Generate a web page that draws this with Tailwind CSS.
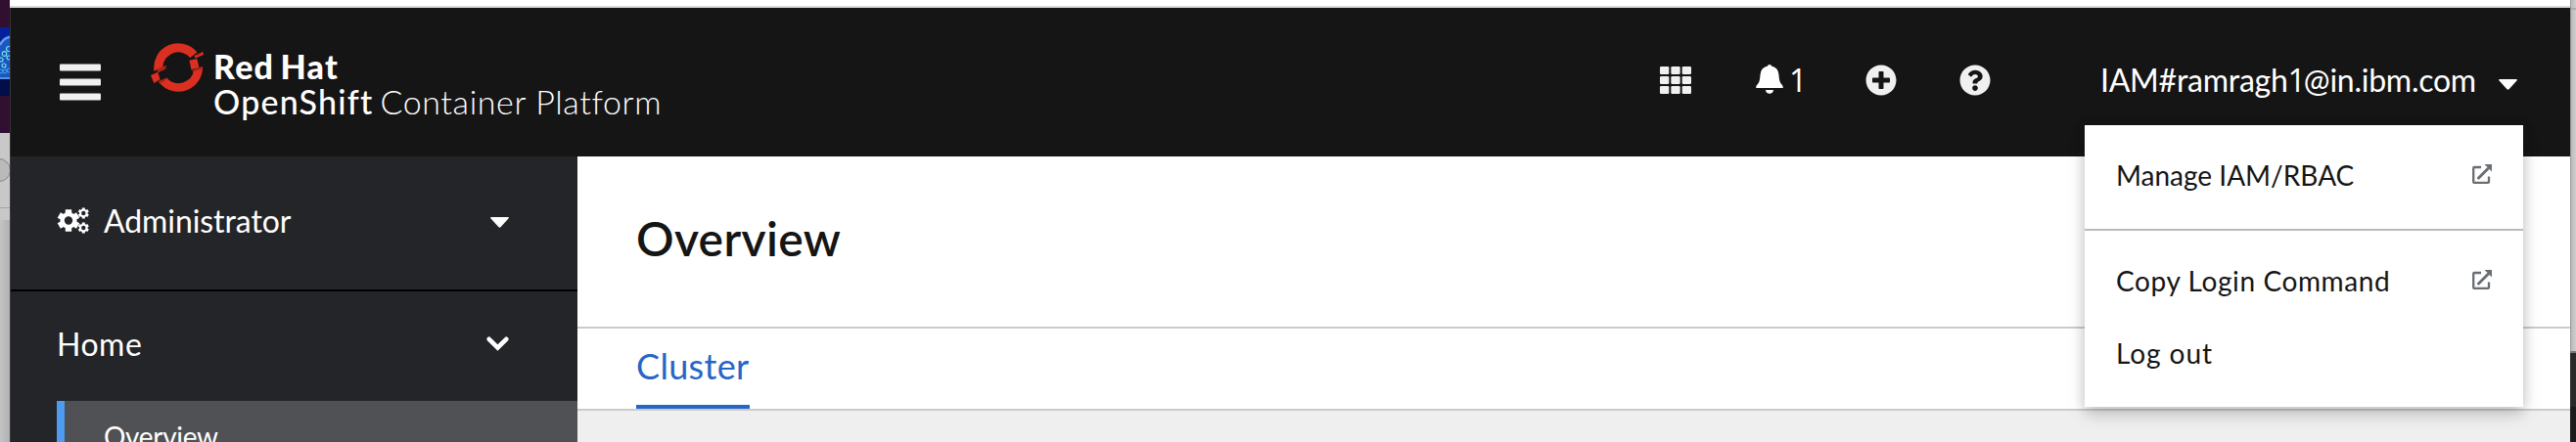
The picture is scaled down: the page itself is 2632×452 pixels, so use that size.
<!DOCTYPE html>
<html lang="en">
<head>
<meta charset="utf-8">
<title>Overview · Red Hat OpenShift Container Platform</title>
<script src="https://cdn.jsdelivr.net/npm/@tailwindcss/browser@4"></script>
</head>
<body class="flex h-[452px] w-[2632px] overflow-hidden bg-[#c6c6c6] font-['Lato','Liberation_Sans',sans-serif] text-[32px]">

<!-- Desktop to the left of the window -->
<div class="flex w-2.5 shrink-0 flex-col bg-linear-to-r from-[#c4c4c4] to-[#b0b0b0]">
  <div class="h-7 bg-[#300f31]"></div>
  <svg class="h-[70px] w-2.5" viewBox="0 0 10 70">
    <rect width="10" height="70" fill="#020e4a"/>
    <rect width="10" height="12" fill="#03209a"/>
    <path d="M0 52V14Q4 9 10 8V52Z" fill="#1c55c4"/>
    <path d="M0 18Q4 11 10 10" fill="none" stroke="#6ba4ee" stroke-width="2"/>
    <path d="M0 52H10" stroke="#5b8fe0" stroke-width="2"/>
    <g fill="none" stroke="#74dfdf" stroke-width="1.2"><circle cx="4.500" cy="27" r="2.300"/><circle cx="1" cy="33" r="2"/><circle cx="9" cy="31" r="2"/><circle cx="4" cy="39" r="2"/><circle cx="9" cy="22" r="2.500"/></g>
    <g fill="none" stroke="#3a9cdd" stroke-width="1.200"><circle cx="1" cy="45" r="1.800"/><circle cx="5" cy="45" r="1.800"/><circle cx="9" cy="44" r="1.800"/></g>
  </svg>
  <div class="h-[38px] bg-[#300f31]"></div>
  <svg class="h-[89px] w-2.5" viewBox="0 0 10 89">
    <rect width="10" height="89" fill="#c8c8c8"/>
    <circle cx="-1" cy="38" r="11.500" fill="#bababa" stroke="#848484"/>
    <path d="M0 76.500H10" stroke="#a2a2a2"/>
  </svg>
</div>

<!-- Browser window -->
<div class="flex h-[452px] w-[2616px] shrink-0 flex-col overflow-hidden bg-white">
  <div class="h-2 shrink-0 border-b-2 border-[#dadbdf] bg-white"></div>

  <header class="relative flex h-[152px] shrink-0 items-center border-l border-[#333] bg-[#151515] pl-[50px] pr-[54px] text-white">
    <svg class="h-[38px] w-[42px]" viewBox="0 0 42 38" fill="#f0f0f0"><rect y=".5" width="42" height="7" rx="1"/><rect y="15.500" width="42" height="7" rx="1"/><rect y="30.500" width="42" height="7" rx="1"/></svg>
    <svg class="-mt-[30px] ml-[51px] h-[50px] w-[54px]" viewBox="12 12 163 150">
      <g fill="#db2f21">
        <path d="M22.500 98A75 75 0 0 1 155 40L134 57A48 48 0 0 0 49 86L36 92Z"/>
        <path d="M172 84A75 75 0 0 1 38 133L61 119A48 48 0 0 0 145 94Z"/>
        <path d="M12 111L34 101L41 124L22 135Z"/>
        <path d="M131 65L155 60L161 87L137 94Z"/>
        <path d="M146 51L173 39L175 48L150 58Z"/>
      </g>
      <g fill="#ad2217">
        <path d="M34 91L60 80L58 92L32 104Z"/>
        <path d="M38 128L65 119L50 132L36 135Z"/>
        <path d="M134 57L173 39L160 49L146 51Z"/>
        <path d="M137 96L172 84L168 92L143 99Z"/>
      </g>
    </svg>
    <div class="ml-2.5 mt-1 whitespace-nowrap text-[34px] leading-9">
      <div class="font-black tracking-[1.2px] [word-spacing:-3px]">Red Hat</div>
      <div><span class="font-medium tracking-[1.2px]">OpenShift</span><span class="ml-[7px] font-light tracking-[0.6px]">Container Platform</span></div>
    </div>

    <div class="-mt-1 ml-auto flex items-center">
      <svg class="h-7 w-8" viewBox="0 0 32 28" fill="#f0f0f0">
        <rect width="9.300" height="8" rx="1.200"/><rect x="11.350" width="9.300" height="8" rx="1.200"/><rect x="22.700" width="9.300" height="8" rx="1.200"/>
        <rect y="10" width="9.300" height="8" rx="1.200"/><rect x="11.350" y="10" width="9.300" height="8" rx="1.200"/><rect x="22.700" y="10" width="9.300" height="8" rx="1.200"/>
        <rect y="20" width="9.300" height="8" rx="1.200"/><rect x="11.350" y="20" width="9.300" height="8" rx="1.200"/><rect x="22.700" y="20" width="9.300" height="8" rx="1.200"/>
      </svg>
      <svg class="-mt-0.5 ml-[66px] h-[30px] w-7" viewBox="0 0 28 30" fill="#fff">
        <path d="M12 1.500Q12 0 14 0T16 1.500Q23 3.200 23.500 10.500Q23.800 17 25.500 19.200Q28 21.800 28 23Q28 24 26.800 24H1.200Q0 24 0 23Q0 21.800 2.500 19.200Q4.200 17 4.500 10.500Q5 3.200 12 1.500Z"/>
        <path d="M10 26H18Q17.600 29.800 14 29.800T10 26Z"/>
      </svg>
      <span class="ml-1.5 w-[23px] font-['Open_Sans'] leading-10">1</span>
      <svg class="ml-[55px] size-8" viewBox="0 0 512 512" fill="#f0f0f0"><path d="M256 8C119 8 8 119 8 256s111 248 248 248 248-111 248-248S393 8 256 8zm144 276c0 6.600-5.400 12-12 12h-92v92c0 6.600-5.400 12-12 12h-56c-6.600 0-12-5.400-12-12v-92h-92c-6.600 0-12-5.400-12-12v-56c0-6.600 5.400-12 12-12h92v-92c0-6.600 5.400-12 12-12h56c6.600 0 12 5.400 12 12v92h92c6.600 0 12 5.400 12 12v56z"/></svg>
      <svg class="ml-16 size-8" viewBox="0 0 512 512" fill="#f0f0f0"><path d="M504 256c0 136.997-111.043 248-248 248S8 392.997 8 256C8 119.083 119.043 8 256 8s248 111.083 248 248zM262.655 90c-54.497 0-89.255 22.957-116.549 63.758-3.536 5.286-2.353 12.415 2.715 16.258l34.699 26.310c5.205 3.947 12.621 3.008 16.665-2.122 17.864-22.658 30.113-35.797 57.303-35.797 20.429 0 45.698 13.148 45.698 32.958 0 14.976-12.363 22.667-32.534 33.976C247.128 238.528 216 254.941 216 296v4c0 6.627 5.373 12 12 12h56c6.627 0 12-5.373 12-12v-1.333c0-28.462 83.186-29.647 83.186-106.667 0-58.002-60.165-102-116.531-102zM256 338c-25.365 0-46 20.635-46 46 0 25.364 20.635 46 46 46s46-20.636 46-46c0-25.365-20.635-46-46-46z"/></svg>
      <span class="ml-[112px] w-[407px] whitespace-nowrap leading-10 tracking-[-0.25px]">IAM#ramragh<span class="font-['Open_Sans'] tracking-[-2px]">1</span>@in.ibm.com</span>
      <svg class="mt-2 h-[11px] w-[19px]" viewBox="0 0 19 11" fill="#fff"><path d="M1 0H18Q19.500 .3 18.500 1.600L10.500 10.300Q9.500 11.200 8.500 10.300L.5 1.600Q-.5 .3 1 0Z"/></svg>
    </div>

    <!-- User menu -->
    <div class="absolute left-[2119px] top-[120px] z-10 w-[448px] bg-white text-[28px] text-[#151515] shadow-[0_8px_16px_rgba(3,3,3,0.18),0_0_12px_rgba(3,3,3,0.12)]">
      <div class="border-b-2 border-[#b8bbbe] pb-[18px] pt-3.5">
        <a class="flex h-[74px] items-center justify-between pl-8 pr-8">
          <span>Manage IAM/RBAC</span>
          <svg class="-mt-0.5 size-5" viewBox="0 0 20 20" fill="none" stroke="#6a6e73" stroke-width="2.300"><path d="M9 3H2Q1.200 3 1.200 4V18Q1.200 18.800 2 18.800H16Q17 18.800 17 18V12.500"/><path d="M6.500 14L16 4.500" stroke-width="3" stroke-linecap="round"/><path d="M12.500 0H20V7.500Z" fill="#6a6e73" stroke="none"/></svg>
        </a>
      </div>
      <div class="pb-[18px] pt-3.5">
        <a class="flex h-[74px] items-center justify-between pl-8 pr-8">
          <span class="tracking-[0.6px]">Copy Login Command</span>
          <svg class="-mt-0.5 size-5" viewBox="0 0 20 20" fill="none" stroke="#6a6e73" stroke-width="2.300"><path d="M9 3H2Q1.200 3 1.200 4V18Q1.200 18.800 2 18.800H16Q17 18.800 17 18V12.500"/><path d="M6.500 14L16 4.500" stroke-width="3" stroke-linecap="round"/><path d="M12.500 0H20V7.500Z" fill="#6a6e73" stroke="none"/></svg>
        </a>
        <a class="flex h-[74px] items-center pl-8 tracking-[0.93px]">Log out</a>
      </div>
    </div>
  </header>

  <div class="flex h-[292px] overflow-hidden">
    <nav class="w-[580px] shrink-0 border-l border-[#3a3b3e] bg-[#242528] text-white">
      <div class="flex h-[138px] items-center border-b-2 border-black pb-[5px] pl-[47px] pr-[70px]">
        <svg class="h-[27px] w-[33px]" viewBox="57 212.500 33 27" fill="#fff" stroke="#fff">
          <g stroke-width="6.400" stroke-linejoin="round"><circle cx="69" cy="226" r="8.500" stroke="none"/><path d="M69 214.800V237.200M59.300 220.400L78.700 231.600M59.300 231.600L78.700 220.400"/></g>
          <circle cx="69" cy="226" r="4.200" fill="#242528" stroke="none"/>
          <g stroke-width="3"><circle cx="84.300" cy="218.500" r="4.300" stroke="none"/><path d="M84.300 213V224M79.500 215.700L89.100 221.300M79.500 221.300L89.100 215.700"/><circle cx="84.300" cy="233.500" r="4.300" stroke="none"/><path d="M84.300 228V239M79.500 230.700L89.100 236.300M79.500 236.300L89.100 230.700"/></g>
          <g fill="#242528" stroke="none"><circle cx="84.300" cy="218.500" r="2.200"/><circle cx="84.300" cy="233.500" r="2.200"/></g>
        </svg>
        <span class="ml-[15px] tracking-[-0.08px]">Administrator</span>
        <svg class="ml-auto mt-1 h-[11px] w-[19px]" viewBox="0 0 19 11" fill="#fff"><path d="M1 0H18Q19.500 .3 18.500 1.600L10.500 10.300Q9.500 11.200 8.500 10.300L.5 1.600Q-.5 .3 1 0Z"/></svg>
      </div>
      <div class="flex h-[108px] items-center justify-between pl-[47px] pr-[70px]">
        <span class="tracking-[0.5px]">Home</span>
        <svg class="-mt-0.5 h-[15px] w-[23px]" viewBox="0 0 23 15" fill="none" stroke="#fff" stroke-width="4.600" stroke-linecap="round"><path d="M2.700 2.800L11.500 11.500L20.300 2.800"/></svg>
      </div>
      <a class="ml-[47px] mt-1 flex h-[72px] items-center border-l-8 border-[#4f9bf0] bg-[#505155] pl-10 text-[28px] tracking-[-0.3px]">Overview</a>
    </nav>

    <main class="flex grow flex-col bg-[#efefef]">
      <div class="flex h-44 shrink-0 items-center border-b-2 border-[#cbcbcb] bg-white pb-[7px] pl-[60px]">
        <h1 class="text-[48px] font-semibold tracking-[0.35px] text-[#151515]">Overview</h1>
      </div>
      <div class="flex h-[84px] shrink-0 border-b-2 border-[#cbcbcb] bg-white pl-[60px]">
        <a class="h-[82px] w-[116px] border-b-4 border-[#2666c8] text-[36px] leading-[76px] tracking-[0.33px] text-[#2666c8]">Cluster</a>
      </div>
    </main>
  </div>
</div>

<!-- Desktop to the right of the window -->
<div class="flex w-1.5 shrink-0 flex-col border-l border-[#999] bg-linear-to-r from-[#bababa] to-[#cecece]">
  <div class="h-2.5 border-b-2 border-[#adadad]"></div>
  <div class="h-[349px]"></div>
  <div class="-ml-px h-[57px] border-t-2 border-[#777] bg-[#282a29]"></div>
  <div class="-ml-px h-9 bg-[#1b1c1b]"></div>
</div>
</body>
</html>
